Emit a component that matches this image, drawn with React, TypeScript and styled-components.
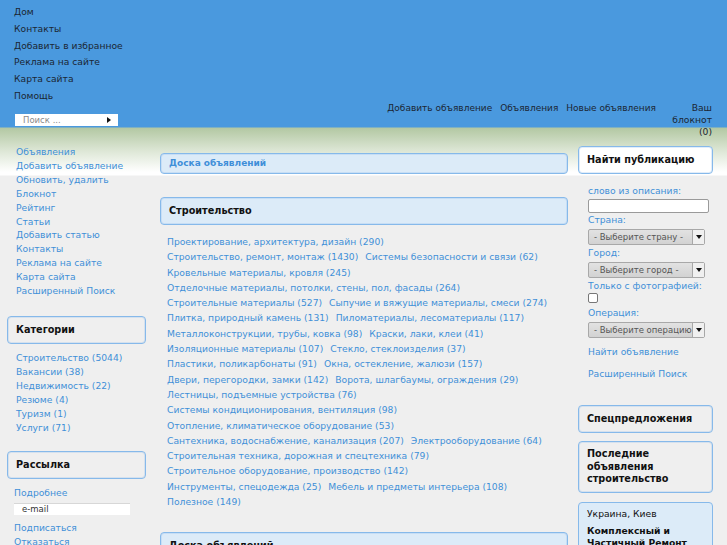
import React from 'react';
import styled, {createGlobalStyle} from "styled-components";

const GlobalStyle = createGlobalStyle`
  body {
    margin: 0;
    background: #efefef;
    font-family: "DejaVu Sans", Verdana, sans-serif;
    font-size: 9.2px;
  }
`

const topMenu = ["Дом", "Контакты", "Добавить в избранное", "Реклама на сайте", "Карта сайта", "Помощь"];
const topLinks = ["Добавить объявление", "Объявления", "Новые объявления"];
const sideMenu = ["Объявления", "Добавить объявление", "Обновить, удалить", "Блокнот", "Рейтинг", "Статьи",
    "Добавить статью", "Контакты", "Реклама на сайте", "Карта сайта", "Расширенный Поиск"];
const categories = ["Строительство (5044)", "Вакансии (38)", "Недвижимость (22)", "Резюме (4)", "Туризм (1)", "Услуги (71)"];

const rubrics = [
    ["Проектирование, архитектура, дизайн (290)"],
    ["Строительство, ремонт, монтаж (1430)", "Системы безопасности и связи (62)"],
    ["Кровельные материалы, кровля (245)"],
    ["Отделочные материалы, потолки, стены, пол, фасады (264)"],
    ["Строительные материалы (527)", "Сыпучие и вяжущие материалы, смеси (274)"],
    ["Плитка, природный камень (131)", "Пиломатериалы, лесоматериалы (117)"],
    ["Металлоконструкции, трубы, ковка (98)", "Краски, лаки, клеи (41)"],
    ["Изоляционные материалы (107)", "Стекло, стеклоизделия (37)"],
    ["Пластики, поликарбонаты (91)", "Окна, остекление, жалюзи (157)"],
    ["Двери, перегородки, замки (142)", "Ворота, шлагбаумы, ограждения (29)"],
    ["Лестницы, подъемные устройства (76)"],
    ["Системы кондиционирования, вентиляция (98)"],
    ["Отопление, климатическое оборудование (53)"],
    ["Сантехника, водоснабжение, канализация (207)", "Электрооборудование (64)"],
    ["Строительная техника, дорожная и спецтехника (79)"],
    ["Строительное оборудование, производство (142)"],
    ["Инструменты, спецодежда (25)", "Мебель и предметы интерьера (108)"],
    ["Полезное (149)"],
];

export default function App() {
    return <>
        <GlobalStyle/>
        <StyledPage>
            <StyledHeader>
                <StyledHeadLeft>
                    {topMenu.map(item => <StyledTopItem key={item}>{item}</StyledTopItem>)}
                    <StyledSearch>
                        <span>Поиск ...</span>
                        <StyledGo/>
                    </StyledSearch>
                </StyledHeadLeft>
                <StyledHeadRight>
                    {topLinks.map(item => <StyledTopItem key={item}>{item}</StyledTopItem>)}
                    <StyledNotepad>Ваш блокнот (0)</StyledNotepad>
                </StyledHeadRight>
            </StyledHeader>

            <StyledBody>
                <StyledLeft>
                    <StyledLinkList>
                        {sideMenu.map(item => <StyledLink key={item}>{item}</StyledLink>)}
                    </StyledLinkList>
                    <StyledBox $top={18}>Категории</StyledBox>
                    <StyledLinkList $top={7}>
                        {categories.map(item => <StyledLink key={item}>{item}</StyledLink>)}
                    </StyledLinkList>
                    <StyledBox $top={17}>Рассылка</StyledBox>
                    <StyledMail>
                        <StyledLink>Подробнее</StyledLink>
                        <StyledMailInput>e-mail</StyledMailInput>
                        <StyledLink>Подписаться</StyledLink>
                        <StyledLink>Отказаться</StyledLink>
                    </StyledMail>
                </StyledLeft>

                <StyledCenter>
                    <StyledBox $blue $small $link>Доска объявлений</StyledBox>
                    <StyledBox $blue $top={23}>Строительство</StyledBox>
                    <StyledRubrics>
                        {rubrics.map((row, i) => <StyledRubricRow key={i}>
                            {row.map(item => <StyledLink key={item}>{item}</StyledLink>)}
                        </StyledRubricRow>)}
                    </StyledRubrics>
                    <StyledBox $blue $top={23}>Доска объявлений</StyledBox>
                </StyledCenter>

                <StyledRight>
                    <StyledBox $white>Найти публикацию</StyledBox>
                    <StyledForm>
                        <StyledLabel>слово из описания:</StyledLabel>
                        <StyledInput/>
                        <StyledLabel>Страна:</StyledLabel>
                        <StyledSelect><span>- Выберите страну -</span><StyledArrow/></StyledSelect>
                        <StyledLabel>Город:</StyledLabel>
                        <StyledSelect><span>- Выберите город -</span><StyledArrow/></StyledSelect>
                        <StyledLabel>Только с фотографией:</StyledLabel>
                        <StyledCheck/>
                        <StyledLabel>Операция:</StyledLabel>
                        <StyledSelect><span>- Выберите операцию</span><StyledArrow/></StyledSelect>
                        <StyledFormLink>Найти объявление</StyledFormLink>
                        <StyledFormLink>Расширенный Поиск</StyledFormLink>
                    </StyledForm>
                    <StyledBox $top={24}>Спецпредложения</StyledBox>
                    <StyledBox $top={8} $tall>Последние объявления строительство</StyledBox>
                    <StyledAd>
                        <StyledAdPlace>Украина, Киев</StyledAdPlace>
                        <StyledAdTitle>Комплексный и Частичный Ремонт</StyledAdTitle>
                    </StyledAd>
                </StyledRight>
            </StyledBody>
        </StyledPage>
    </>
}


const StyledPage = styled.div`
  min-height: 100vh;
  background: linear-gradient(to bottom, #4a99de 0, #4a99de 127px, #b3c8a3 128px, #dfe8d8 152px, #ffffff 172px, #ffffff 175px, #efefef 176px);
`

const StyledHeader = styled.header`
  display: flex;
  height: 128px;
  color: #1b2633;
`

const StyledHeadLeft = styled.div`
  width: 160px;
  padding: 4px 0 0 14px;
  box-sizing: border-box;
`

const StyledTopItem = styled.div`
  line-height: 16.8px;
  white-space: nowrap;
`

const StyledSearch = styled.div`
  position: relative;
  margin: 9px 0 0 1px;
  width: 103px;
  height: 12px;
  background: #fff;
  box-sizing: border-box;
  font-size: 8.5px;
  line-height: 12px;
  color: #8a8a8a;
  padding-left: 8px;
`

const StyledGo = styled.span`
  position: absolute;
  right: 7px;
  top: 3px;
  border-left: 4px solid #111;
  border-top: 3px solid transparent;
  border-bottom: 3px solid transparent;
`

const StyledHeadRight = styled.div`
  flex: 1;
  display: flex;
  justify-content: flex-end;
  align-items: flex-start;
  gap: 8px;
  padding: 100px 15px 0 0;
  font-size: 9px;
`

const StyledNotepad = styled.div`
  width: 41px;
  margin: 2px 0 0 7px;
  text-align: right;
  line-height: 12px;
  font-size: 9.2px;
`

const StyledBody = styled.div`
  display: flex;
  align-items: flex-start;
  padding-left: 7px;
`

const StyledLeft = styled.div`
  width: 139px;
  padding-top: 17px;
`

const StyledCenter = styled.div`
  width: 408px;
  margin-left: 14px;
  padding-top: 25px;
`

const StyledRight = styled.div`
  width: 135px;
  margin-left: 10px;
  padding-top: 18px;
`

const StyledLinkList = styled.div<{ $top?: number }>`
  margin-top: ${p => p.$top ?? 0}px;
  padding-left: 9px;
  line-height: 13.9px;
`

const StyledLink = styled.div`
  color: #3f8fd8;
  white-space: nowrap;
`

const StyledBox = styled.div<{ $top?: number, $blue?: boolean, $white?: boolean, $small?: boolean, $link?: boolean, $tall?: boolean }>`
  margin-top: ${p => p.$top ?? 0}px;
  border: 1px solid #86b9ea;
  border-radius: 4px;
  background: ${p => p.$blue ? '#dcebf8' : p.$white ? '#ffffff' : '#efefef'};
  color: ${p => p.$link ? '#3f8fd8' : '#111'};
  font-weight: bold;
  font-size: ${p => p.$small ? 9 : 9.7}px;
  box-sizing: border-box;
  min-height: ${p => p.$small ? 21 : 28}px;
  padding: ${p => p.$small ? '3px 8px' : p.$tall ? '6px 8px' : '7px 8px'};
  line-height: ${p => p.$tall ? '12.5px' : '12px'};
  box-shadow: inset 0 0 0 1px rgba(134, 185, 234, 0.25);
`

const StyledMail = styled.div`
  margin-top: 7px;
  padding-left: 7px;
  line-height: 14px;
`

const StyledMailInput = styled.div`
  margin: 3px 0 6px;
  width: 116px;
  height: 12px;
  background: #fff;
  border-top: 1px solid #d7d7d7;
  box-sizing: border-box;
  font-size: 8.5px;
  line-height: 11px;
  color: #333;
  padding-left: 8px;
`

const StyledRubrics = styled.div`
  margin-top: 9px;
  padding-left: 7px;
  line-height: 15.3px;
`

const StyledRubricRow = styled.div`
  display: flex;
  gap: 7px;
`

const StyledForm = styled.div`
  display: flex;
  flex-direction: column;
  align-items: flex-start;
  padding: 10px 0 0 10px;
`

const StyledLabel = styled.div`
  color: #3f8fd8;
  line-height: 13px;
  white-space: nowrap;
`

const StyledInput = styled.div`
  width: 121px;
  height: 14px;
  margin: 2px 0 0;
  background: #fff;
  border: 1px solid #9a9a9a;
  border-radius: 2px;
  box-sizing: border-box;
`

const StyledSelect = styled.div`
  display: flex;
  width: 117px;
  height: 16px;
  margin: 3px 0 1px;
  border: 1px solid #a8a8a8;
  border-radius: 2px;
  box-sizing: border-box;
  background: linear-gradient(#e2e2e2, #d2d2d2);
  color: #555;
  font-size: 8.5px;
  line-height: 14px;

  span {
    flex: 1;
    padding-left: 5px;
    overflow: hidden;
    white-space: nowrap;
  }
`

const StyledArrow = styled.div`
  width: 11px;
  border-left: 1px solid #a8a8a8;
  background: #f0f0f0;
  position: relative;

  &::after {
    content: "";
    position: absolute;
    left: 3px;
    top: 5px;
    border-top: 4px solid #111;
    border-left: 3px solid transparent;
    border-right: 3px solid transparent;
  }
`

const StyledCheck = styled.div`
  width: 10px;
  height: 10px;
  margin: 1px 0 3px;
  background: #fff;
  border: 1px solid #777;
  border-radius: 2px;
  box-sizing: border-box;
`

const StyledFormLink = styled.div`
  color: #3f8fd8;
  line-height: 14px;
  margin-top: 6px;

  & + & {
    margin-top: 8px;
  }
`

const StyledAd = styled.div`
  margin-top: 9px;
  border: 1px solid #86b9ea;
  border-radius: 4px;
  background: #dcebf8;
  padding: 5px 8px 8px;
  color: #111;
  min-height: 60px;
`

const StyledAdPlace = styled.div`
  line-height: 12px;
`

const StyledAdTitle = styled.div`
  margin-top: 5px;
  font-weight: bold;
  line-height: 12.5px;
`
